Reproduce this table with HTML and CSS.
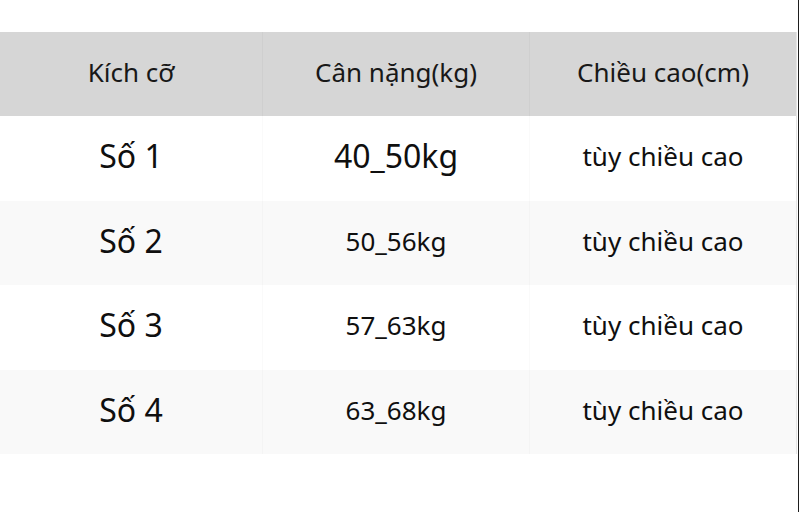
FILE: index.html
```html
<!DOCTYPE html>
<html lang="vi">
<head>
<meta charset="utf-8">
<link rel="stylesheet" href="styles.css">
</head>
<body>
<div class="page">
  <div class="table">
    <div class="row head">
      <div class="cell">Kích cỡ</div>
      <div class="cell">Cân nặng(kg)</div>
      <div class="cell">Chiều cao(cm)</div>
    </div>
    <div class="row">
      <div class="cell big">Số 1</div>
      <div class="cell big">40_50kg</div>
      <div class="cell">tùy chiều cao</div>
    </div>
    <div class="row alt">
      <div class="cell big">Số 2</div>
      <div class="cell">50_56kg</div>
      <div class="cell">tùy chiều cao</div>
    </div>
    <div class="row">
      <div class="cell big">Số 3</div>
      <div class="cell">57_63kg</div>
      <div class="cell">tùy chiều cao</div>
    </div>
    <div class="row alt">
      <div class="cell big">Số 4</div>
      <div class="cell">63_68kg</div>
      <div class="cell">tùy chiều cao</div>
    </div>
  </div>
</div>
</body>
</html>
```
FILE: styles.css
```css
html, body {
  margin: 0;
  padding: 0;
  background: #ffffff;
}
.page {
  width: 799px;
  height: 512px;
  border-right: 1px solid #1e1e1e;
  padding-top: 32px;
  box-sizing: border-box;
  font-family: "Noto Sans", "Open Sans", sans-serif;
  color: #0f0f0f;
}
.table {
  width: 797px;
  border-right: 1px solid #e4e4e4;
  box-sizing: border-box;
}
.row {
  display: grid;
  grid-template-columns: 263px 267px 1fr;
  height: 84.5px;
}
.row.head {
  height: 84px;
  background: #d6d6d6;
  color: #181818;
}
.row.alt {
  background: #f9f9f9;
}
.cell {
  display: flex;
  align-items: center;
  justify-content: center;
  font-size: 26px;
  line-height: 1;
  padding-bottom: 4px;
  box-sizing: border-box;
  border-right: 1px solid rgba(0, 0, 0, 0.02);
}
.head .cell {
  border-right-color: rgba(0, 0, 0, 0.03);
}
.cell:last-child {
  border-right: none;
}
.cell.big {
  font-size: 32px;
}
```
